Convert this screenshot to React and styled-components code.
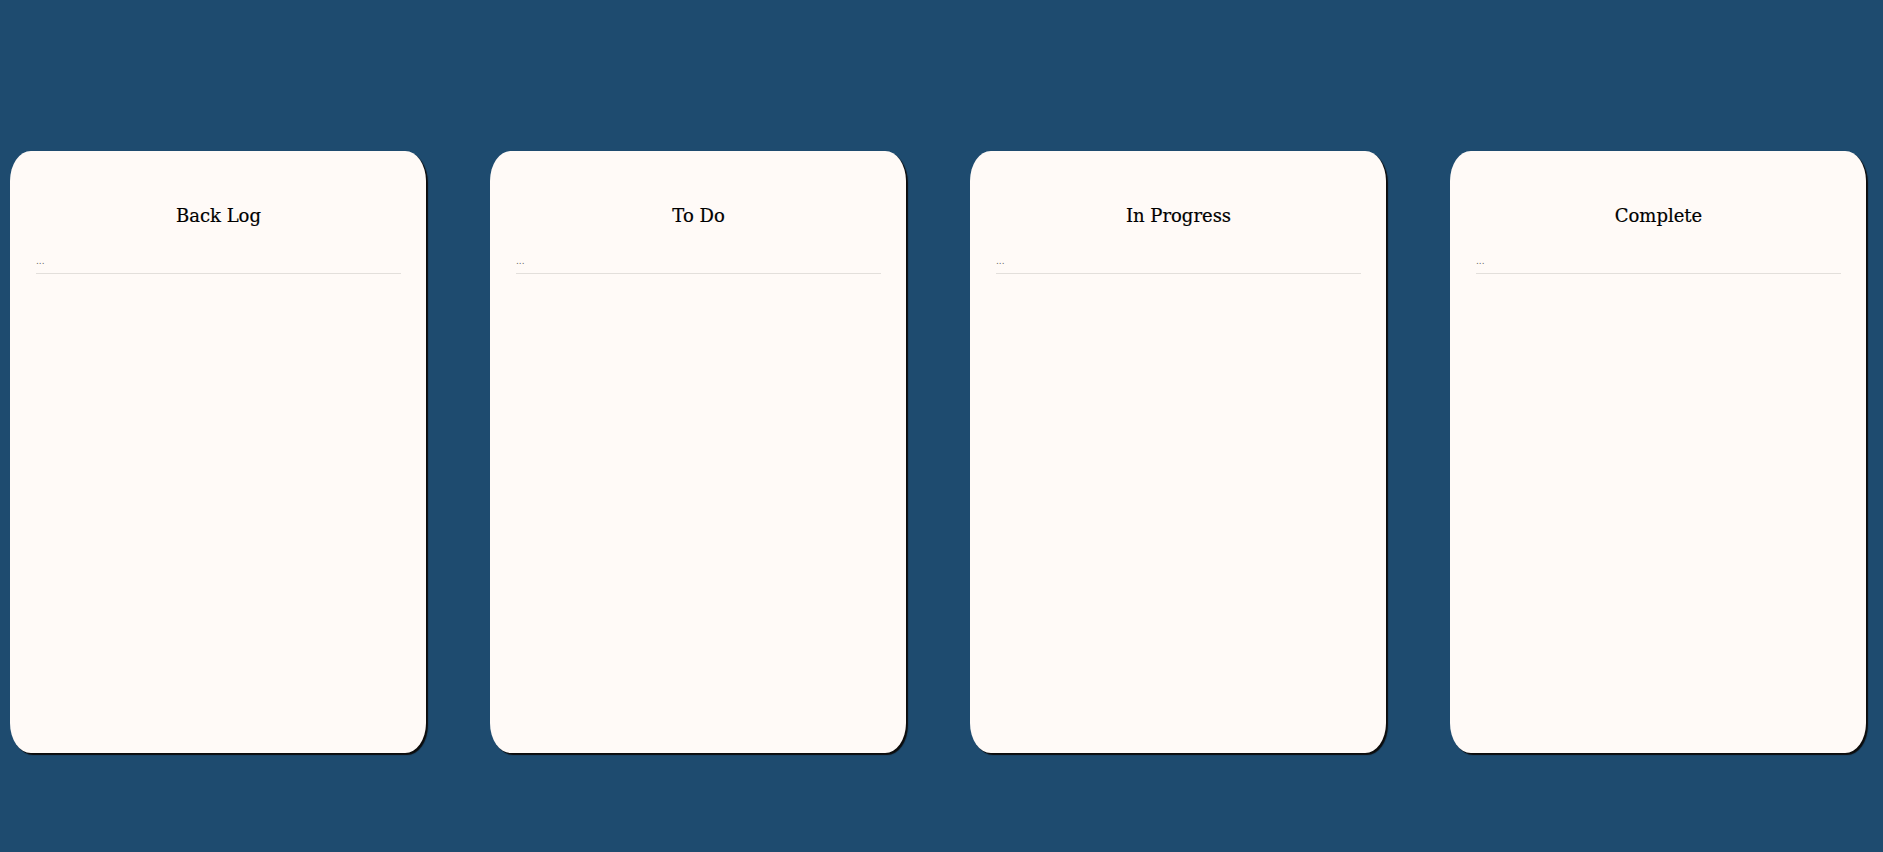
import styled, { createGlobalStyle } from "styled-components";

const GlobalStyle = createGlobalStyle`
  html, body {
    margin: 0;
    padding: 0;
    background: #1e4b6f;
  }
  body {
    font-family: "DejaVu Serif", "Liberation Serif", serif;
    min-height: 100vh;
  }
`;

const Board = styled.div`
  display: flex;
  gap: 64px;
  padding: 151px 0 0 10px;
  min-height: 100vh;
  box-sizing: border-box;
`;

const Column = styled.section`
  width: 416px;
  height: 602px;
  box-sizing: border-box;
  background: #fffaf7;
  border-radius: 5%;
  box-shadow: 2px 2px 1px #0c0c0c;
  padding: 42px 25px 0 26px;
  display: flex;
  flex-direction: column;
`;

const Title = styled.h2`
  margin: 0;
  text-align: center;
  font-size: 18px;
  font-weight: 400;
  color: #000;
  line-height: 46px;
  -webkit-text-stroke: 0.2px #000;
`;

const NewTask = styled.input`
  margin-top: 17px;
  width: 100%;
  box-sizing: border-box;
  border: none;
  border-bottom: 1px solid #e3dfdb;
  background: transparent;
  font-family: "DejaVu Sans", sans-serif;
  font-size: 9px;
  padding: 0 0 7px 0;
  outline: none;
  &::placeholder {
    color: #666;
  }
`;

const columns = ["Back Log", "To Do", "In Progress", "Complete"];

export default function App() {
  return (
    <>
      <GlobalStyle />
      <Board>
        {columns.map((name) => (
          <Column key={name}>
            <Title>{name}</Title>
            <NewTask placeholder="..." />
          </Column>
        ))}
      </Board>
    </>
  );
}
